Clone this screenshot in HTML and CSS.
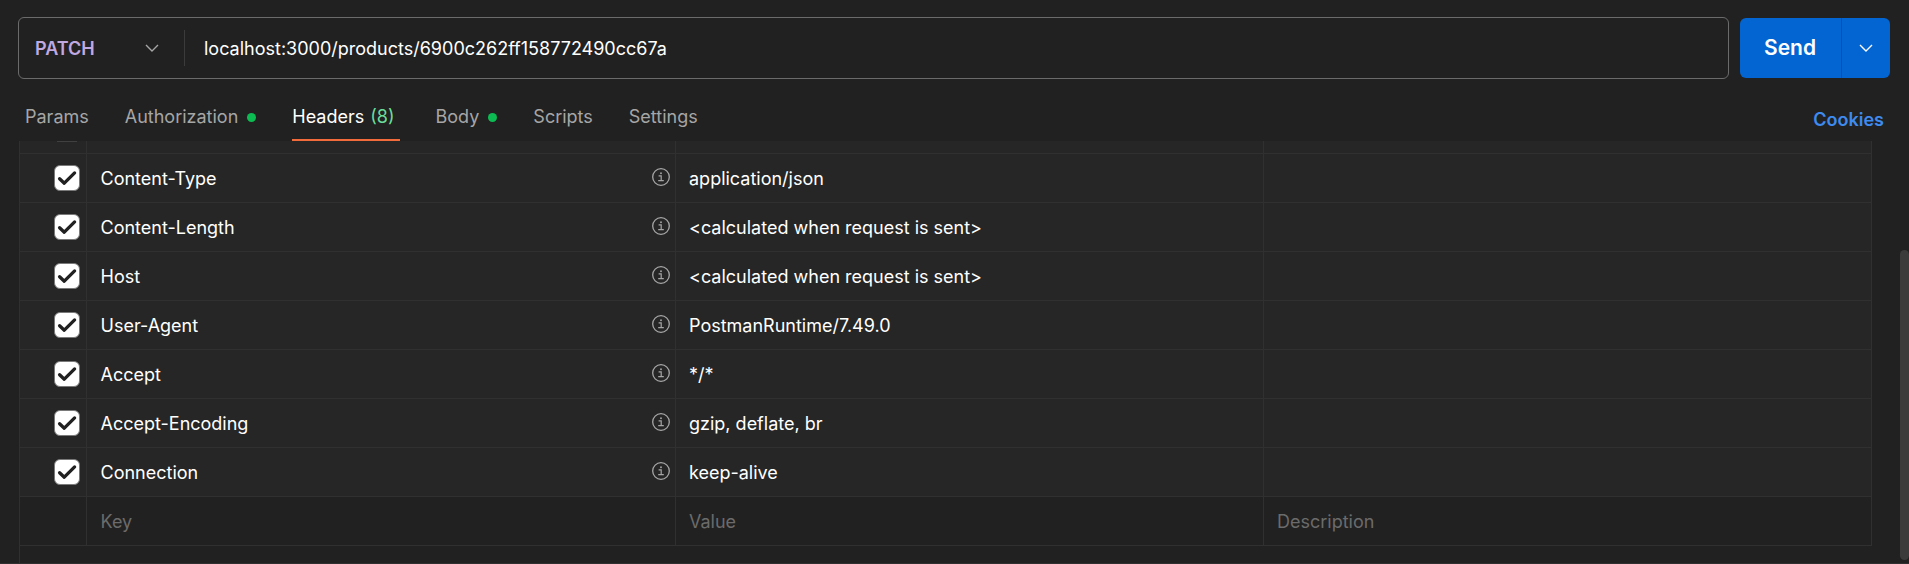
FILE: index.html
```html
<!DOCTYPE html>
<html lang="en">
<head>
<meta charset="utf-8">
<title>Request</title>
<link rel="stylesheet" href="styles.css">
</head>
<body>
<svg class="defs" width="0" height="0">
  <symbol id="chevron" viewBox="0 0 14 8"><path d="M1 1l6 6 6-6" fill="none" stroke="currentColor" stroke-width="1.4"/></symbol>
  <symbol id="info" viewBox="0 0 18 18"><circle cx="9" cy="9" r="8.3" fill="none" stroke="currentColor" stroke-width="1.3"/><path d="M6.6 7.9h2.6v4.6M6.2 12.6h5.6" fill="none" stroke="currentColor" stroke-width="1.2"/><circle cx="9" cy="5.3" r=".95" fill="currentColor"/></symbol>
  <symbol id="check" viewBox="0 0 26 26"><rect x=".5" y=".5" width="25" height="25" rx="5.5" fill="#fff" stroke="#7a7a7a"/><path d="M5.6 13.7l4.7 4.5L20.6 7.9" fill="none" stroke="#212121" stroke-width="3.3" stroke-linecap="round" stroke-linejoin="round"/></symbol>
</svg>
<div class="request">
  <div class="request-bar">
    <div class="url-box">
      <div class="method"><span>PATCH</span><svg class="chevron"><use href="#chevron"/></svg></div>
      <div class="url">localhost:3000/products/6900c262ff158772490cc67a</div>
    </div>
    <div class="send">
      <div class="send-main">Send</div>
      <div class="send-more"><svg class="chevron"><use href="#chevron"/></svg></div>
    </div>
  </div>
  <div class="tab-bar">
    <div class="tab">Params</div>
    <div class="tab">Authorization<i class="dot"></i></div>
    <div class="tab active">Headers <span class="count">(8)</span></div>
    <div class="tab">Body<i class="dot"></i></div>
    <div class="tab">Scripts</div>
    <div class="tab">Settings</div>
    <div class="cookies">Cookies</div>
  </div>
  <div class="content">
    <div class="table">
      <div class="row partial"><div class="cell pick"><i class="box-edge"></i></div><div class="cell"></div><div class="cell"></div><div class="cell"></div></div>
      <div class="row"><div class="cell pick"><svg class="check"><use href="#check"/></svg></div><div class="cell key">Content-Type<svg class="info"><use href="#info"/></svg></div><div class="cell">application/json</div><div class="cell"></div></div>
      <div class="row"><div class="cell pick"><svg class="check"><use href="#check"/></svg></div><div class="cell key">Content-Length<svg class="info"><use href="#info"/></svg></div><div class="cell">&lt;calculated when request is sent&gt;</div><div class="cell"></div></div>
      <div class="row"><div class="cell pick"><svg class="check"><use href="#check"/></svg></div><div class="cell key">Host<svg class="info"><use href="#info"/></svg></div><div class="cell">&lt;calculated when request is sent&gt;</div><div class="cell"></div></div>
      <div class="row"><div class="cell pick"><svg class="check"><use href="#check"/></svg></div><div class="cell key">User-Agent<svg class="info"><use href="#info"/></svg></div><div class="cell">PostmanRuntime/7.49.0</div><div class="cell"></div></div>
      <div class="row"><div class="cell pick"><svg class="check"><use href="#check"/></svg></div><div class="cell key">Accept<svg class="info"><use href="#info"/></svg></div><div class="cell">*/*</div><div class="cell"></div></div>
      <div class="row"><div class="cell pick"><svg class="check"><use href="#check"/></svg></div><div class="cell key">Accept-Encoding<svg class="info"><use href="#info"/></svg></div><div class="cell">gzip, deflate, br</div><div class="cell"></div></div>
      <div class="row"><div class="cell pick"><svg class="check"><use href="#check"/></svg></div><div class="cell key">Connection<svg class="info"><use href="#info"/></svg></div><div class="cell">keep-alive</div><div class="cell"></div></div>
      <div class="row empty"><div class="cell pick"></div><div class="cell key">Key</div><div class="cell">Value</div><div class="cell">Description</div></div>
    </div>
    <div class="scrollbar"></div>
  </div>
</div>
</body>
</html>
```
FILE: styles.css
```css
* { box-sizing: border-box; }
html { height: 564px; overflow: hidden; }
body {
  margin: 0;
  height: 564px;
  background: #212121;
  color: #fff;
  font: 18px/24px Inter, "Liberation Sans", sans-serif;
  overflow: hidden;
}
.defs { display: block; }
.request {
  display: flex;
  flex-direction: column;
  height: 564px;
  border-bottom: 1px solid #303030;
}
.request-bar {
  display: flex;
  align-items: center;
  flex-shrink: 0;
  gap: 11px;
  height: 79px;
  padding: 17px 19px 0 18px;
}
.url-box {
  display: flex;
  align-items: center;
  flex: 1;
  height: 62px;
  border: 1px solid #6b6b6b;
  border-radius: 6px;
}
.method {
  display: flex;
  align-items: center;
  justify-content: space-between;
  width: 166px;
  height: 36px;
  padding: 0 25px 0 16px;
  border-right: 1px solid #3b3b3b;
  color: #c0a8e1;
  font-weight: 600;
}
.method span, .url { padding-top: 2px; }
.chevron { width: 14px; height: 8px; color: #a6a6a6; }
.url { padding-left: 19px; }
.send {
  display: flex;
  width: 150px;
  height: 60px;
  border-radius: 6px;
  background: #0265d2;
  overflow: hidden;
}
.send-main {
  flex: 1;
  display: flex;
  align-items: center;
  justify-content: center;
  padding-right: 1px;
  border-right: 1px solid #0453ab;
  font-size: 21px;
  font-weight: 600;
}
.send-more {
  width: 48px;
  display: flex;
  align-items: center;
  justify-content: center;
}
.send-more .chevron { color: #fff; }
.tab-bar {
  display: flex;
  flex-shrink: 0;
  height: 62px;
  padding: 0 25px;
  gap: 36px;
  color: #a6a6a6;
}
.tab {
  display: flex;
  align-items: center;
  height: 62px;
  padding-top: 20px;
  padding-bottom: 6px;
}
.tab.active {
  color: #fff;
  padding-right: 5px;
  box-shadow: inset 0 -2px #f26b3a;
}
.count { color: #6bdd9a; margin-left: 6px; }
.dot {
  width: 9px;
  height: 9px;
  margin-left: 9px;
  border-radius: 50%;
  background: #0cbb52;
}
.cookies {
  margin-left: auto;
  padding-top: 29px;
  color: #3d8bef;
  font-weight: 600;
}
.content {
  flex: 1;
  display: flex;
  justify-content: space-between;
  min-height: 0;
  padding-left: 19px;
}
.table {
  width: 1853px;
  border-left: 1px solid #303030;
}
.row {
  display: grid;
  grid-template-columns: 67px 589px 588px 608px;
  height: 49px;
  background: #262626;
}
.row.partial { height: 13px; }
.row.empty { background: #212121; color: #6b6b6b; }
.cell {
  display: flex;
  align-items: center;
  padding: 1px 5px 0 13px;
  border-right: 1px solid #303030;
  border-bottom: 1px solid #303030;
}
.cell.key { justify-content: space-between; padding-left: 13.5px; }
.cell.pick { justify-content: flex-end; padding: 0 6px 0 0; }
.box-edge {
  align-self: flex-start;
  width: 20px;
  height: 1px;
  margin-right: 3px;
  background: #404040;
}
.check { width: 26px; height: 26px; }
.info { width: 18px; height: 18px; margin-bottom: 3px; color: #a6a6a6; }
.scrollbar {
  width: 9px;
  height: 310px;
  margin-top: 109px;
  border-radius: 5px;
  background: #3b3b3b;
}
```
